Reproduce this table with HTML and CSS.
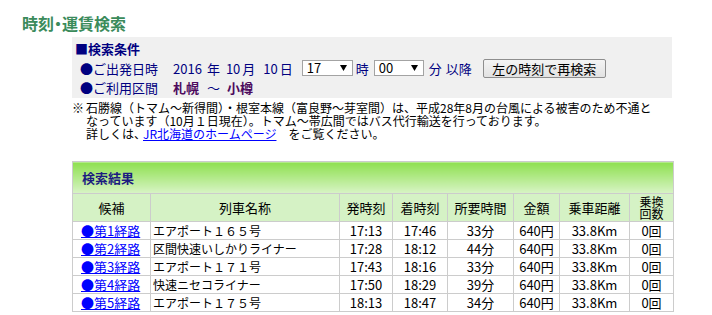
FILE: index.html
```html
<!DOCTYPE html>
<html lang="ja">
<head>
<meta charset="utf-8">
<title>時刻・運賃検索</title>
<link rel="stylesheet" href="styles.css">
</head>
<body>
<h1 class="title">時刻・運賃検索</h1>
<div class="cond">
  <div class="cond-row cond-head">■検索条件</div>
  <div class="cond-row mid">
    <span class="lbl">●ご出発日時</span>
    <span class="yr">2016</span><span class="u1">年</span>
    <span class="mo">10</span><span class="u2">月</span>
    <span class="dy">10</span><span class="u2">日</span>
    <span class="sel sel1">17<svg class="arr" width="7" height="6" viewBox="0 0 7 6"><polygon points="0,0 7,0 3.5,6" fill="#000"/></svg></span>
    <span class="u3">時</span>
    <span class="sel sel2">00<svg class="arr" width="7" height="6" viewBox="0 0 7 6"><polygon points="0,0 7,0 3.5,6" fill="#000"/></svg></span>
    <span class="u4">分</span><span class="u5">以降</span>
    <button class="btn" type="button">左の時刻で再検索</button>
  </div>
  <div class="cond-row">
    <span class="lbl">●ご利用区間</span>
    <b class="st st1">札幌</b><span class="tilde">～</span><b class="st">小樽</b>
  </div>
</div>
<p class="notice"><span class="kome">※</span>石勝線（トマム～新得間）・根室本線（富良野～芽室間）は、平成28年8月の台風による被害のため不通と<br>なっています（10月１日現在）。トマム～帯広間ではバス代行輸送を行っております。<br>詳しくは、<a href="#" class="hp">JR北海道のホームページ</a><span class="after">をご覧ください。</span></p>
<table class="result">
  <colgroup>
    <col class="w1"><col class="w2"><col class="w3"><col class="w4"><col class="w5"><col class="w6"><col class="w7"><col class="w8">
  </colgroup>
  <tr><th colspan="8" class="band">検索結果</th></tr>
  <tr class="hdr"><th>候補</th><th>列車名称</th><th>発時刻</th><th>着時刻</th><th>所要時間</th><th>金額</th><th>乗車距離</th><th class="multi">乗換<br>回数</th></tr>
  <tr><td class="route"><a href="#">●第1経路</a></td><td class="name">エアポート１６５号</td><td>17:13</td><td>17:46</td><td>33分</td><td>640円</td><td>33.8Km</td><td>0回</td></tr>
  <tr><td class="route"><a href="#">●第2経路</a></td><td class="name">区間快速いしかりライナー</td><td>17:28</td><td>18:12</td><td>44分</td><td>640円</td><td>33.8Km</td><td>0回</td></tr>
  <tr><td class="route"><a href="#">●第3経路</a></td><td class="name">エアポート１７１号</td><td>17:43</td><td>18:16</td><td>33分</td><td>640円</td><td>33.8Km</td><td>0回</td></tr>
  <tr><td class="route"><a href="#">●第4経路</a></td><td class="name">快速ニセコライナー</td><td>17:50</td><td>18:29</td><td>39分</td><td>640円</td><td>33.8Km</td><td>0回</td></tr>
  <tr><td class="route"><a href="#">●第5経路</a></td><td class="name">エアポート１７５号</td><td>18:13</td><td>18:47</td><td>34分</td><td>640円</td><td>33.8Km</td><td>0回</td></tr>
</table>
</body>
</html>
```

FILE: styles.css
```css
html, body {
  margin: 0;
  padding: 0;
  background: #ffffff;
}
body {
  font-family: "Noto Sans CJK JP", "Liberation Sans", sans-serif;
  font-size: 13px;
  color: #000000;
}
.title {
  margin: 13px 0 4px 22px;
  font-size: 16px;
  line-height: 20px;
  font-weight: bold;
  color: #3b8b5b;
  font-feature-settings: "palt";
}
.cond {
  margin-left: 72px;
  width: 600px;
  height: 61px;
  box-sizing: border-box;
  padding: 2px 0 1px 0;
  background: #f0f0f0;
  color: #000080;
}
.cond-row {
  display: flex;
  align-items: center;
  height: 19px;
  line-height: 19px;
  padding-left: 8px;
  white-space: nowrap;
}
.cond-row.mid {
  height: 20px;
}
.cond-head {
  padding-left: 3px;
  font-weight: bold;
}
.yr { margin-left: 15px; }
.u1 { margin-left: 5px; }
.mo { margin-left: 6px; }
.u2 { margin-left: 2px; }
.dy { margin-left: 8px; }
.sel {
  display: flex;
  align-items: center;
  justify-content: space-between;
  box-sizing: border-box;
  height: 16px;
  line-height: 14px;
  padding: 0 5px 0 4px;
  border: 1px solid #a3a3a3;
  background: #ffffff;
  color: #000000;
}
.sel1 { width: 51px; margin-left: 9px; }
.sel2 { width: 50px; margin-left: 5px; }
.u3 { margin-left: 3px; }
.u4 { margin-left: 5px; }
.u5 { margin-left: 4px; }
.btn {
  margin-left: 11px;
  width: 123px;
  height: 19px;
  padding: 0;
  font-family: "Noto Sans CJK JP", "Liberation Sans", sans-serif;
  font-size: 13px;
  line-height: 15px;
  color: #000000;
  background: linear-gradient(#f4f4f4, #e2e2e2);
  border: 1px solid #8e8e8e;
  border-radius: 2px;
}
.st {
  color: #4d0a5e;
  font-weight: bold;
}
.st1 { margin-left: 15px; }
.tilde { margin: 0 7px 0 8px; }
.notice {
  margin: 3px 0 0 72px;
  font-size: 12px;
  line-height: 13px;
  padding-left: 14px;
  text-indent: -14px;
  white-space: nowrap;
}
.kome {
  display: inline-block;
  width: 14px;
  text-indent: 0;
}
.hp { color: #0000ff; margin-left: -3px; }
.after { margin-left: 12px; }
a { color: #0000ff; text-decoration: underline; }

.result {
  margin: 21px 0 0 72px;
  border-collapse: collapse;
  table-layout: fixed;
  width: 601px;
  font-size: 13px;
}
.w1 { width: 78px; }
.w2 { width: 189px; }
.w3 { width: 53px; }
.w4 { width: 55px; }
.w5 { width: 66px; }
.w6 { width: 46px; }
.w7 { width: 70px; }
.w8 { width: 44px; }
.result th, .result td {
  border: 1px solid #cccccc;
  padding: 0;
}
.band {
  height: 31px;
  text-align: left;
  padding-left: 9px !important;
  background: linear-gradient(#8ee04f, #d8f4c6);
  color: #1c1c80;
  font-weight: bold;
}
.hdr th {
  height: 27px;
  background: #d5f2c5;
  font-weight: normal;
  line-height: 16px;
}
.hdr th.multi {
  font-size: 12px;
  line-height: 12px;
}
.result td {
  height: 17px;
  line-height: 17px;
  text-align: center;
  white-space: nowrap;
}
.result td.name {
  text-align: left;
  padding-left: 2px;
  font-size: 12px;
}
.result td.route {
  text-align: left;
  padding-left: 8px;
}
```
